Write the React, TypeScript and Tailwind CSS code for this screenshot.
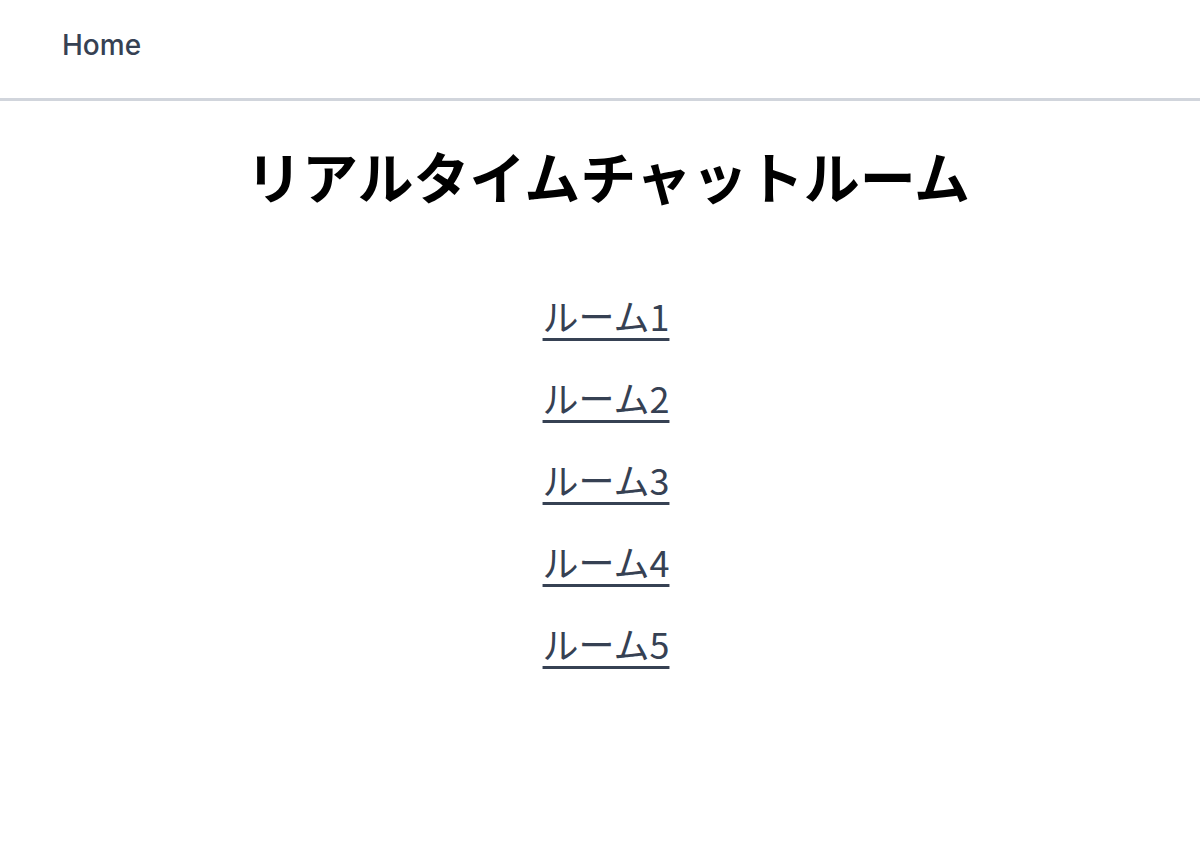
const rooms = ["ルーム1", "ルーム2", "ルーム3", "ルーム4", "ルーム5"];

export default function App() {
  return (
    <div className="min-h-screen bg-white font-['Noto_Sans','Noto_Sans_CJK_JP',sans-serif]">
      {/* Nav */}
      <nav className="h-[101px] flex items-center px-[62px] pb-[8px] border-b-[3px] border-gray-300">
        <a href="#" className="text-[28px] font-medium text-gray-700 font-['Inter',sans-serif]">
          Home
        </a>
      </nav>

      {/* Title */}
      <h1 className="mt-[40px] text-center text-[56px] leading-[67px] font-bold text-black font-['Noto_Sans_CJK_JP',sans-serif] pl-[16px]">
        リアルタイムチャットルーム
      </h1>

      {/* Rooms */}
      <ul className="mt-[66px] flex flex-col items-center pl-[12px]">
        {rooms.map((room) => (
          <li key={room} className="h-[82px] flex items-center">
            <a
              href="#"
              className="text-[36px] leading-none text-gray-700 underline decoration-[3px] underline-offset-[7px] font-['Noto_Sans_CJK_JP',sans-serif]"
            >
              {room}
            </a>
          </li>
        ))}
      </ul>
    </div>
  );
}
